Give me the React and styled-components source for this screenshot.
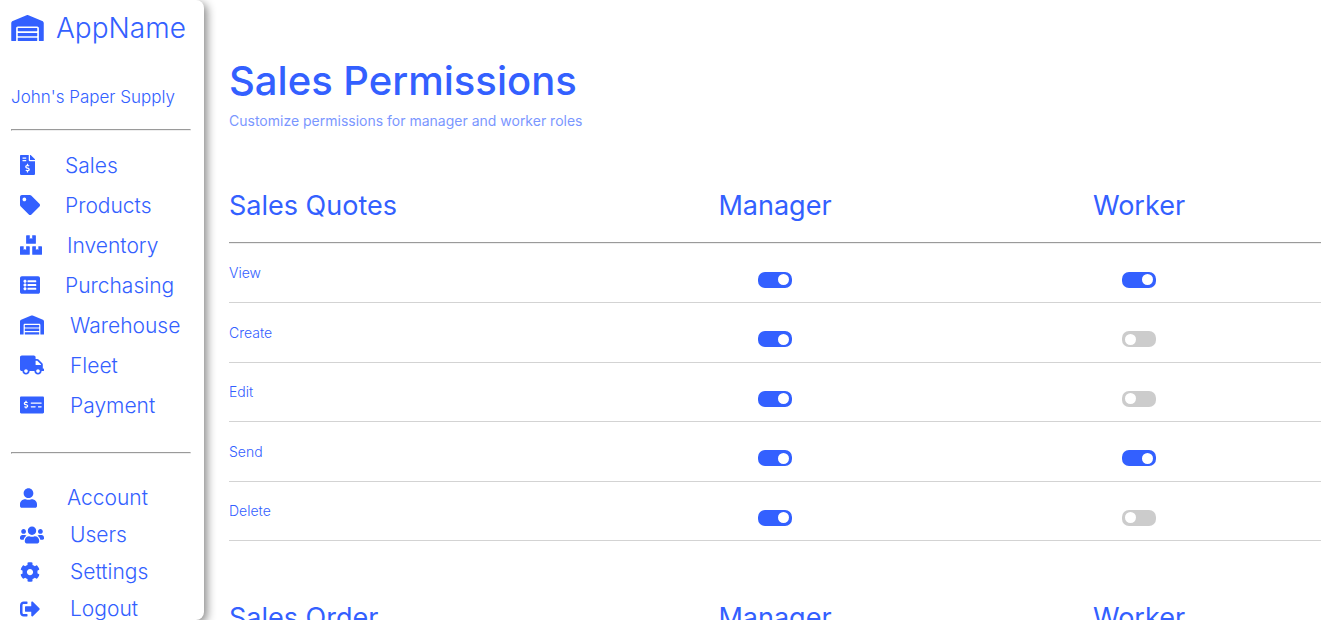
import React from "react";
import styled, { createGlobalStyle } from "styled-components";
import {
  FaWarehouse,
  FaFileInvoiceDollar,
  FaTag,
  FaBoxes,
  FaListAlt,
  FaTruck,
  FaMoneyCheckAlt,
  FaUser,
  FaUsers,
  FaCog,
  FaSignOutAlt,
} from "react-icons/fa";

const BLUE = "#3360ff";

const GlobalStyle = createGlobalStyle`
  *, *::before, *::after { box-sizing: border-box; }
  body {
    margin: 0;
    background: #fff;
    color: ${BLUE};
    font-family: Inter, "Open Sans", sans-serif;
  }
`;

const Layout = styled.div`
  display: grid;
  grid-template-columns: 204px minmax(0, 1fr);
  min-height: 100vh;
`;

const Sidebar = styled.aside`
  position: sticky;
  top: 0;
  height: 100vh;
  padding: 11px 13px 0 11px;
  border-radius: 0 8px 8px 0;
  background: #fff;
  box-shadow: 3px 3px 10px #888;
  overflow: hidden;
  white-space: nowrap;
`;

const Brand = styled.a`
  display: flex;
  align-items: center;
  gap: 12px;
  height: 34px;
  color: inherit;
  font-size: 28px;
  font-weight: 300;
  text-decoration: none;

  svg {
    width: 33px;
    height: 26px;
  }
`;

const Company = styled.p`
  margin: 42px 0 22px;
  font-size: 17px;
  line-height: 20px;
  font-weight: 300;
`;

const Divider = styled.hr`
  margin: 0;
  border: 1px inset #eee;
`;

const NavList = styled.ul`
  display: grid;
  grid-auto-rows: ${({ $row }) => $row}px;
  margin: ${({ $top }) => $top}px 0 ${({ $bottom }) => $bottom}px;
  padding: 0 0 0 9px;
  list-style: none;
`;

const NavLink = styled.a`
  display: grid;
  grid-template-columns: ${({ $column }) => $column}px 1fr;
  align-items: center;
  height: 100%;
  color: inherit;
  font-size: 21px;
  font-weight: 300;
  text-decoration: none;

  svg {
    width: ${({ $icon }) => $icon}px;
    height: 20px;
  }
`;

const Main = styled.main`
  padding: 57px 21px 60px 25px;
`;

const Title = styled.h1`
  margin: 0;
  font-size: 40px;
  line-height: 48px;
  font-weight: 500;
`;

const Subtitle = styled.p`
  margin: 8px 0 0;
  font-size: 14px;
  line-height: 16px;
  font-weight: 400;
  opacity: 0.65;
`;

const PermissionTable = styled.table`
  width: 100%;
  margin-top: 40px;
  table-layout: fixed;
  border-collapse: separate;
  border-spacing: 0;
`;

const HeadCell = styled.th`
  height: 75px;
  padding: 0;
  border-bottom: 2px groove #eee;
  font-size: 27px;
  line-height: 32px;
  font-weight: 400;
  text-align: ${({ $start }) => ($start ? "left" : "center")};
`;

const PermissionRow = styled.tr`
  height: 59px;

  &:nth-child(even) {
    height: 60px;
  }

  > * {
    padding: 0;
    border-bottom: 1px solid #d3d3d3;
  }
`;

const NameCell = styled.th`
  font-size: 14px;
  line-height: 16px;
  font-weight: 300;
  text-align: left;
`;

const ToggleCell = styled.td`
  text-align: center;

  && {
    padding-top: 13px;
  }
`;

const Toggle = styled.input`
  appearance: none;
  display: flex;
  align-items: center;
  width: 34px;
  height: 16px;
  margin: 0 auto;
  padding: 0 3px;
  border-radius: 7px;
  background: #ccc;
  cursor: pointer;

  &::before {
    content: "";
    width: 11px;
    height: 11px;
    border-radius: 50%;
    background: #fff;
  }

  &:checked {
    justify-content: flex-end;
    background: ${BLUE};
  }
`;

const primaryNav = [
  { label: "Sales", Icon: FaFileInvoiceDollar, icon: 15, column: 45 },
  { label: "Products", Icon: FaTag, icon: 20, column: 45 },
  { label: "Inventory", Icon: FaBoxes, icon: 22, column: 47 },
  { label: "Purchasing", Icon: FaListAlt, icon: 20, column: 45 },
  { label: "Warehouse", Icon: FaWarehouse, icon: 24, column: 50 },
  { label: "Fleet", Icon: FaTruck, icon: 24, column: 50 },
  { label: "Payment", Icon: FaMoneyCheckAlt, icon: 24, column: 50 },
];

const accountNav = [
  { label: "Account", Icon: FaUser, icon: 17, column: 47 },
  { label: "Users", Icon: FaUsers, icon: 24, column: 50 },
  { label: "Settings", Icon: FaCog, icon: 20, column: 50 },
  { label: "Logout", Icon: FaSignOutAlt, icon: 20, column: 50 },
];

const permissions = [
  { name: "View", manager: true, worker: true },
  { name: "Create", manager: true, worker: false },
  { name: "Edit", manager: true, worker: false },
  { name: "Send", manager: true, worker: true },
  { name: "Delete", manager: true, worker: false },
];

function Nav({ items, label, ...spacing }) {
  return (
    <nav aria-label={label}>
      <NavList {...spacing}>
        {items.map(({ label: text, Icon, icon, column }) => (
          <li key={text}>
            <NavLink href={`#${text.toLowerCase()}`} $icon={icon} $column={column}>
              <Icon aria-hidden="true" />
              <span>{text}</span>
            </NavLink>
          </li>
        ))}
      </NavList>
    </nav>
  );
}

function PermissionSection({ title }) {
  return (
    <PermissionTable>
      <thead>
        <tr>
          <HeadCell scope="col" $start>{title}</HeadCell>
          <HeadCell scope="col">Manager</HeadCell>
          <HeadCell scope="col">Worker</HeadCell>
        </tr>
      </thead>
      <tbody>
        {permissions.map(({ name, manager, worker }) => (
          <PermissionRow key={name}>
            <NameCell scope="row">{name}</NameCell>
            <ToggleCell>
              <Toggle type="checkbox" defaultChecked={manager} aria-label={`${title}: ${name}, manager`} />
            </ToggleCell>
            <ToggleCell>
              <Toggle type="checkbox" defaultChecked={worker} aria-label={`${title}: ${name}, worker`} />
            </ToggleCell>
          </PermissionRow>
        ))}
      </tbody>
    </PermissionTable>
  );
}

export default function App() {
  return (
    <>
      <GlobalStyle />
      <Layout>
        <Sidebar>
          <Brand href="#home">
            <FaWarehouse aria-hidden="true" />
            <span>AppName</span>
          </Brand>
          <Company>John's Paper Supply</Company>
          <Divider />
          <Nav label="Main" items={primaryNav} $row={40} $top={14} $bottom={27} />
          <Divider />
          <Nav label="Account" items={accountNav} $row={37} $top={25} $bottom={0} />
        </Sidebar>
        <Main>
          <Title>Sales Permissions</Title>
          <Subtitle>Customize permissions for manager and worker roles</Subtitle>
          <PermissionSection title="Sales Quotes" />
          <PermissionSection title="Sales Order" />
        </Main>
      </Layout>
    </>
  );
}
